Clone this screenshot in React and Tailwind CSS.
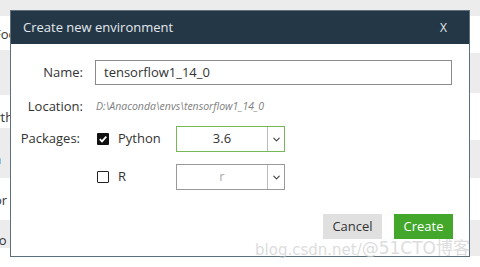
import { ChevronDown } from 'lucide-react'

const LEFT_ROWS = [
  { h: 16, bg: 'bg-[#ececec]', t: '', pad: '' },
  { h: 34, bg: 'bg-white', t: 'Foo', pad: 'pt-[4px]' },
  { h: 45, bg: 'bg-[#ececec]', t: '', pad: '' },
  { h: 33, bg: 'bg-white', t: 'yth', pad: 'pt-[12px]' },
  { h: 50, bg: 'bg-[#ececec]', t: 'a', pad: 'pt-[14px]' },
  { h: 42, bg: 'bg-white', t: 'or', pad: 'pt-[4px]' },
  { h: 28, bg: 'bg-[#ececec]', t: 'to', pad: 'pt-[14px]' },
  { h: 19, bg: 'bg-white', t: '', pad: '' },
]

const RIGHT_ROWS = [
  { h: 16, bg: 'bg-[#ececec]' },
  { h: 37, bg: 'bg-white' },
  { h: 40, bg: 'bg-[#ececec]' },
  { h: 47, bg: 'bg-white' },
  { h: 38, bg: 'bg-[#ececec]' },
  { h: 42, bg: 'bg-white' },
  { h: 36, bg: 'bg-[#ececec]' },
  { h: 11, bg: 'bg-white' },
]

function Check({ on }) {
  return on ? (
    <span className="flex h-[12px] w-[12px] items-center justify-center rounded-[1px] bg-[#111]">
      <svg width="10" height="10" viewBox="0 0 10 10">
        <path d="M1.8 5.2 L4 7.4 L8.3 2.6" fill="none" stroke="white" strokeWidth="1.8" />
      </svg>
    </span>
  ) : (
    <span className="h-[12px] w-[12px] rounded-[1px] border-[1.5px] border-[#222] bg-white" />
  )
}

function Select({ value, active }) {
  return (
    <div
      className={`flex h-[26px] w-[109px] items-stretch border ${active ? 'border-[#74b857]' : 'border-[#999]'} bg-white`}
    >
      <div className={`flex flex-1 items-center justify-center text-[13px] ${active ? 'text-[#333]' : 'text-[#aaa]'}`}>
        {value}
      </div>
      <div className="flex w-[17px] items-center justify-center border-l border-[#bbb]">
        <ChevronDown size={11} strokeWidth={2.5} className="text-[#444]" />
      </div>
    </div>
  )
}

export default function App() {
  return (
    <div className="relative h-[267px] w-[480px] overflow-hidden bg-white font-['Open_Sans',sans-serif] text-[#333]">
      <div className="flex h-full">
        <div className="flex w-[240px] flex-col">
          {LEFT_ROWS.map((r, i) => (
            <div key={i} className={`${r.bg} ${r.pad} flex items-center`} style={{ height: r.h }}>
              <span className="-ml-[6px] text-[13px] text-[#333]">{r.t}</span>
            </div>
          ))}
        </div>
        <div className="flex w-[240px] flex-col">
          {RIGHT_ROWS.map((r, i) => (
            <div key={i} className={r.bg} style={{ height: r.h }} />
          ))}
        </div>
      </div>

      <div className="absolute left-[10px] top-[10px] flex h-[247px] w-[460px] flex-col border border-[#5b6f7d] bg-white">
        <div className="flex h-[33px] items-center justify-between bg-[#243746] pl-[12px] pr-[22px] text-[13px] text-[#e3e8ec]">
          <span>Create new environment</span>
          <span className="text-[12px]">X</span>
        </div>

        <div className="grid grid-cols-[72px_1fr] gap-x-[12px] pt-[16px]">
          <div className="flex h-[25px] items-center justify-end text-[13px]">Name:</div>
          <div className="flex h-[25px] w-[357px] items-center border border-[#8a8a8a] pl-[8px] text-[13px] text-[#333]">
            tensorflow1_14_0
          </div>

          <div className="mt-[14px] flex h-[16px] items-center justify-end text-[13px]">Location:</div>
          <div className="mt-[14px] flex h-[16px] items-center pl-[1px] text-[10.5px] italic text-[#808080]">
            D:\Anaconda\envs\tensorflow1_14_0
          </div>

          <div className="mt-[11px] flex h-[26px] items-center justify-end pr-[3px] text-[13px]">Packages:</div>
          <div className="mt-[11px] flex h-[26px] items-center">
            <div className="ml-[2px] flex w-[79px] items-center gap-[9px]">
              <Check on />
              <span className="text-[13px]">Python</span>
            </div>
            <Select value="3.6" active />
          </div>

          <div />
          <div className="mt-[12px] flex h-[26px] items-center">
            <div className="ml-[2px] flex w-[79px] items-center gap-[9px]">
              <Check />
              <span className="text-[13px]">R</span>
            </div>
            <Select value="r" />
          </div>
        </div>

        <div className="mt-[24px] flex justify-end gap-[12px] pr-[16px]">
          <button type="button" className="h-[25px] w-[59px] bg-[#e0e0e0] text-[13px] text-[#333]">
            Cancel
          </button>
          <button type="button" className="h-[25px] w-[59px] bg-[#42a72b] text-[13px] text-white">
            Create
          </button>
        </div>
      </div>

      <div className="pointer-events-none absolute bottom-[6px] right-[10px] flex items-end whitespace-nowrap text-[#cfcfcf] opacity-70">
        <span className="font-['DejaVu_Sans',sans-serif] text-[15px]">blog.csdn.net/</span>
        <span className="font-['DejaVu_Sans','Noto_Sans_CJK_SC',sans-serif] text-[17px]">@51CTO博客</span>
      </div>
    </div>
  )
}
